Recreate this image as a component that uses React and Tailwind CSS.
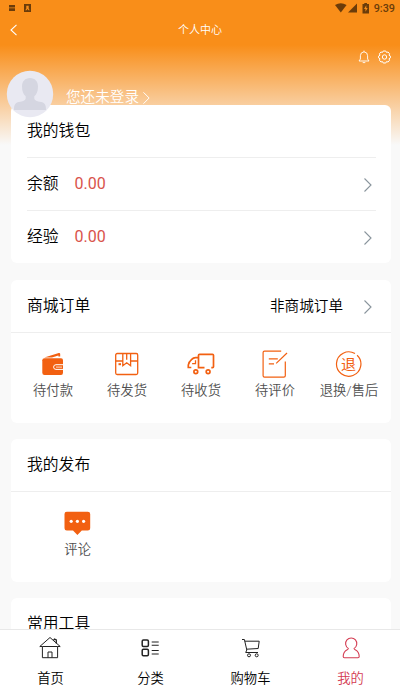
import React from "react";

const ORANGE = "#f26011";

const ChevronRight = ({ className = "" }) => (
  <svg viewBox="0 0 10 16" fill="none" stroke="currentColor" strokeWidth="1.1" className={className}>
    <path d="M1.5 1.5 L8 8 L1.5 14.5" />
  </svg>
);

// Order icons
const WalletIcon = () => (
  <svg width="28" height="28" viewBox="0 0 28 28" fill={ORANGE}>
    <path d="M5.3 7.4 L19.8 3 Q21.2 2.7 21.2 4 V6.6 H19.4 V5.6 L13 7.4 Z" />
    <path d="M5.5 8.2 H22 Q24 8.2 24 10.2 V22.8 Q24 25 22 25 H5.5 Q3.3 25 3.3 22.8 V10.2 Q3.3 8.2 5.5 8.2 Z" />
    <path d="M24.2 14.7 H17 Q14.6 14.7 14.6 17.1 Q14.6 19.4 17 19.4 H24.2" stroke="#fff" strokeWidth="1" fill="none" />
    <path d="M17 17.1 H23" stroke="#fff" strokeWidth="0.8" />
  </svg>
);

const BoxIcon = () => (
  <svg width="28" height="28" viewBox="0 0 28 28" fill="none" stroke={ORANGE} strokeWidth="1.3">
    <rect x="2.7" y="3.5" width="22" height="21" rx="1.5" />
    <path d="M2.7 11 H9.8 M17.6 11 H24.7 M9.8 3.5 V15.8 L13.7 12.8 L17.6 15.8 V3.5 M13.7 3.5 V9.7" />
    <path d="M5.5 14.2 H8" strokeWidth="2" />
  </svg>
);

const TruckIcon = () => (
  <svg width="28" height="28" viewBox="0 0 28 28" fill="none" stroke={ORANGE} strokeWidth="1.7">
    <path d="M17.5 17.7 H11.5 V5.2 Q11.5 4.3 12.5 4.3 H25.5 Q26.5 4.3 26.5 5.2 V16.8 Q26.5 17.7 25.5 17.7 H24.3" />
    <path d="M11 7.6 H8.5 Q6.3 7.6 4.7 9.4 Q1.7 12 1.3 15 V17.5 H4.3" />
    <path d="M8.5 10.2 V13.6 H5.1" strokeWidth="1.3" />
    <circle cx="8.8" cy="21.7" r="1.9" />
    <circle cx="21.1" cy="21.7" r="1.9" />
  </svg>
);

const ReviewIcon = () => (
  <svg width="28" height="28" viewBox="0 0 28 28" fill="none" stroke={ORANGE} strokeWidth="1.2">
    <path d="M20.2 1.2 H3.5 Q2.1 1.2 2.1 2.5 V25.8 Q2.1 27.1 3.5 27.1 H22.8 Q24.3 27.1 24.3 25.8 V11.5" />
    <path d="M7.8 8.8 H16.8 M7.8 13.8 H13" />
    <path d="M15.2 13.4 L26 3" />
  </svg>
);

const ReturnIcon = () => (
  <span className="relative flex w-[28px] h-[28px] items-center justify-center pr-px pt-[2px] text-[15px] leading-none text-[#f26011] font-normal">
    <svg viewBox="0 0 28 28" fill="none" stroke={ORANGE} strokeWidth="1.2" className="absolute inset-0">
      <path d="M20 3.6 A12.2 12.2 0 1 0 22.1 5.2" />
    </svg>
    退
  </span>
);

const CommentIcon = () => (
  <svg width="28" height="28" viewBox="0 0 28 28">
    <path d="M2.8 2.7 H23.8 Q26.2 2.7 26.2 5 V19.2 Q26.2 21.5 23.8 21.5 H17.8 L13.4 26 L9 21.5 H2.8 Q0.5 21.5 0.5 19.2 V5 Q0.5 2.7 2.8 2.7 Z" fill={ORANGE} />
    <circle cx="7.2" cy="12.3" r="1.6" fill="#fff" />
    <circle cx="13.4" cy="12.3" r="1.6" fill="#fff" />
    <circle cx="19.6" cy="12.3" r="1.6" fill="#fff" />
  </svg>
);

// Tab bar icons
const HomeIcon = () => (
  <svg width="24" height="24" viewBox="0 0 24 24" fill="none" stroke="#222" strokeWidth="1">
    <path d="M1.8 10.5 L12 1.5 L22.2 10.5 H19.6 V21.7 H4.4 V10.5 Z" />
    <path d="M4.4 10.5 H19.6" />
    <path d="M15.5 4.4 L16.5 3 L18.3 4 V7.5" strokeWidth="1.3" />
    <path d="M10 21.7 V16 H14 V21.7" />
  </svg>
);

const CategoryIcon = () => (
  <svg width="24" height="24" viewBox="0 0 24 24" fill="none" stroke="#222">
    <rect x="4.2" y="4" width="6.2" height="6.4" rx="1.2" strokeWidth="1.5" />
    <rect x="4.2" y="13.2" width="6.2" height="6.6" rx="1.2" strokeWidth="1.5" />
    <path d="M13.7 6 H20.7 M13.7 9.3 H20.7 M13.7 14.5 H20.7 M13.7 18 H20.7" strokeWidth="1.1" />
  </svg>
);

const CartIcon = () => (
  <svg width="24" height="24" viewBox="0 0 24 24" fill="none" stroke="#222" strokeWidth="1">
    <path d="M4 3.5 H6.4 L8.8 14 L7.7 16.5 H20" />
    <path d="M6.8 5.2 H21.2 L20.2 12.5 L8.5 13.2" />
    <circle cx="11" cy="19.3" r="1.5" />
    <circle cx="18.7" cy="19.3" r="1.5" />
  </svg>
);

const MineIcon = () => (
  <svg width="24" height="24" viewBox="0 0 24 24" fill="none" stroke="#d43c52" strokeWidth="1.1">
    <path d="M10.3 12.4 A5.6 5.6 0 1 1 16.1 12.4 Q16 13.2 17.2 13.8 Q21.2 15.9 21.2 20.5 Q21.2 21.7 20 21.7 H6.4 Q5.2 21.7 5.2 20.5 Q5.2 15.9 9.2 13.8 Q10.4 13.2 10.3 12.4 Z" />
  </svg>
);

const orders = [
  { label: "待付款", icon: <WalletIcon /> },
  { label: "待发货", icon: <BoxIcon /> },
  { label: "待收货", icon: <TruckIcon /> },
  { label: "待评价", icon: <ReviewIcon /> },
  { label: "退换/售后", icon: <ReturnIcon /> },
];

const tabs = [
  { label: "首页", icon: <HomeIcon /> },
  { label: "分类", icon: <CategoryIcon /> },
  { label: "购物车", icon: <CartIcon /> },
  { label: "我的", icon: <MineIcon />, active: true },
];

const GridItem = ({ icon, label }) => (
  <div className="flex flex-col items-center">
    {icon}
    <span className="mt-[3px] text-[13.3px] leading-5 text-[#505050] whitespace-nowrap">{label}</span>
  </div>
);

const WalletRow = ({ label, value }) => (
  <div className="flex h-[53px] items-center border-t border-[#eeeeee]">
    <span>{label}</span>
    <span className="ml-4 text-[16px] font-normal text-[#d9534b]">{value}</span>
    <ChevronRight className="ml-auto mr-[3px] mt-px w-[10px] h-[16px] text-[#89949c]" />
  </div>
);

const StatusBar = () => (
  <div className="flex h-4 items-center pl-[9px] pr-[5px] text-[#6b3c0a]">
    <svg width="22" height="8" viewBox="0 0 22 8" fill="currentColor">
      <path d="M0 1 H6 V3.6 H0 Z M0 4.3 H6 V7 H0 Z" />
      <path fillRule="evenodd" d="M15 0 H22 V8 H15 Z M17.3 1.8 V4.4 L16.3 6.3 H17.5 L18.5 5 L19.5 6.3 H20.7 L19.7 4.4 V1.8 Z" />
    </svg>
    <svg width="34" height="11" viewBox="0 0 34 11" fill="currentColor" className="ml-auto">
      <path d="M0 2 Q5.8 -1.4 11.6 2 L5.8 9.4 Z" />
      <path d="M22 0.4 V9.4 H13 Z" />
      <path fillRule="evenodd" d="M29.3 0 H32 V1 H34 V10.4 H27.5 V1 H29.3 Z M31.3 2.2 L29 6 H30.5 V8.8 L32.7 5 H31.3 Z" />
    </svg>
    <span className="ml-[5px] mt-[2px] text-[10.8px] font-medium leading-none">9:39</span>
  </div>
);

const App = () => {
  return (
    <div className="flex h-[690px] w-[400px] flex-col overflow-hidden bg-[#f9f9f9] text-[15.8px] font-[350] text-black font-[Roboto,'Noto_Sans_CJK_SC',sans-serif]">
      <div className="flex-1 min-h-0 overflow-hidden bg-[linear-gradient(to_bottom,#f98e19_0px,#f98e19_45px,#f9f9f9_145px)]">
        <StatusBar />

        {/* Title bar */}
        <div className="grid h-[28px] grid-cols-[1fr_auto_1fr] items-center px-[9px] text-white">
          <svg width="9" height="12" viewBox="0 0 9 12" fill="none" stroke="currentColor" strokeWidth="1.1">
            <path d="M7.5 0.8 L2 6 L7.5 11.2" />
          </svg>
          <h1 className="text-[11px] leading-none">个人中心</h1>
        </div>

        {/* Notifications and settings */}
        <div className="mt-px flex h-6 items-center justify-end gap-[8px] pr-[9px] text-white">
          <svg width="12" height="14" viewBox="0 0 12 14" fill="none" stroke="currentColor" strokeWidth="0.9">
            <path d="M1 11 H11 L9.6 9 V5.7 Q9.6 2.2 6 1.8 Q2.4 2.2 2.4 5.7 V9 Z M6 1.8 V0.6 M4.7 12.6 H7.3" />
          </svg>
          <svg width="13" height="14" viewBox="0 0 13 14" fill="none" stroke="currentColor" strokeWidth="1">
            <path d="M5.2 1 H7.8 L8.5 2.4 L10.1 2 L11.6 3.8 L11 5.2 L12.4 6.1 V7.9 L11 8.8 L11.6 10.2 L10.1 12 L8.5 11.6 L7.8 13 H5.2 L4.5 11.6 L2.9 12 L1.4 10.2 L2 8.8 L0.6 7.9 V6.1 L2 5.2 L1.4 3.8 L2.9 2 L4.5 2.4 Z" />
            <circle cx="6.5" cy="7" r="2.2" />
          </svg>
        </div>

        {/* User info, the avatar overlaps the wallet card */}
        <div className="relative z-10 flex h-9 items-start pl-[6px]">
          <svg width="48" height="48" viewBox="0 0 48 48" className="mt-px shrink-0">
            <circle cx="24" cy="24" r="23.2" fill="#e9e9f2" />
            <path d="M24 8 C29 8 32 11.5 32 16.5 C32 21.5 30.5 24.5 28.3 26.3 V28.5 C28.5 30.5 31 31.2 35 32 C38.7 32.8 40 34.5 40 40 H8 C8 34.5 9.3 32.8 13 32 C17 31.2 19.5 30.5 19.7 28.5 V26.3 C17.5 24.5 16 21.5 16 16.5 C16 11.5 19 8 24 8 Z" fill="#d5d6e1" />
          </svg>
          <div className="ml-3 mt-[18px] flex items-center text-[14.6px] leading-5 text-white">
            您还未登录
            <ChevronRight className="ml-[3px] mt-px w-[9px] h-[14px]" />
          </div>
        </div>

        <div className="flex flex-col gap-4 pl-[11px] pr-[9px]">
          {/* Wallet */}
          <section className="rounded-md bg-white pl-4 pr-[15px]">
            <h2 className="flex h-[52px] items-center">我的钱包</h2>
            <WalletRow label="余额" value="0.00" />
            <WalletRow label="经验" value="0.00" />
          </section>

          {/* Orders */}
          <section className="mt-px h-[143px] shrink-0 rounded-md bg-white">
            <div className="flex h-[53px] items-center border-b border-[#eeeeee] pl-4 pr-[18px]">
              <h2>商城订单</h2>
              <span className="ml-auto mt-px text-[14.6px]">非商城订单</span>
              <ChevronRight className="ml-5 mt-[2px] w-[10px] h-[16px] text-[#89949c]" />
            </div>
            <div className="grid grid-cols-5 px-[5px] pt-[17px]">
              {orders.map((item) => (
                <GridItem key={item.label} {...item} />
              ))}
            </div>
          </section>

          {/* Posts */}
          <section className="h-[143px] shrink-0 rounded-md bg-white">
            <h2 className="flex h-[53px] items-center border-b border-[#eeeeee] pl-4">我的发布</h2>
            <div className="grid grid-cols-3 px-[5px] pt-[17px]">
              <GridItem icon={<CommentIcon />} label="评论" />
            </div>
          </section>

          {/* Tools */}
          <section className="h-[143px] shrink-0 rounded-md bg-white">
            <h2 className="flex h-[51px] items-center pl-4">常用工具</h2>
          </section>
        </div>
      </div>

      {/* Bottom tabs */}
      <nav className="grid h-[61px] shrink-0 grid-cols-4 border-t border-[#e8e8e8] bg-white pt-[6px]">
        {tabs.map((tab) => (
          <div
            key={tab.label}
            className={`flex flex-col items-center text-[13.3px] leading-5 ${tab.active ? "text-[#d43c52]" : "text-black"}`}
          >
            {tab.icon}
            <span className="mt-[9px] ml-px">{tab.label}</span>
          </div>
        ))}
      </nav>
    </div>
  );
};

export default App;
